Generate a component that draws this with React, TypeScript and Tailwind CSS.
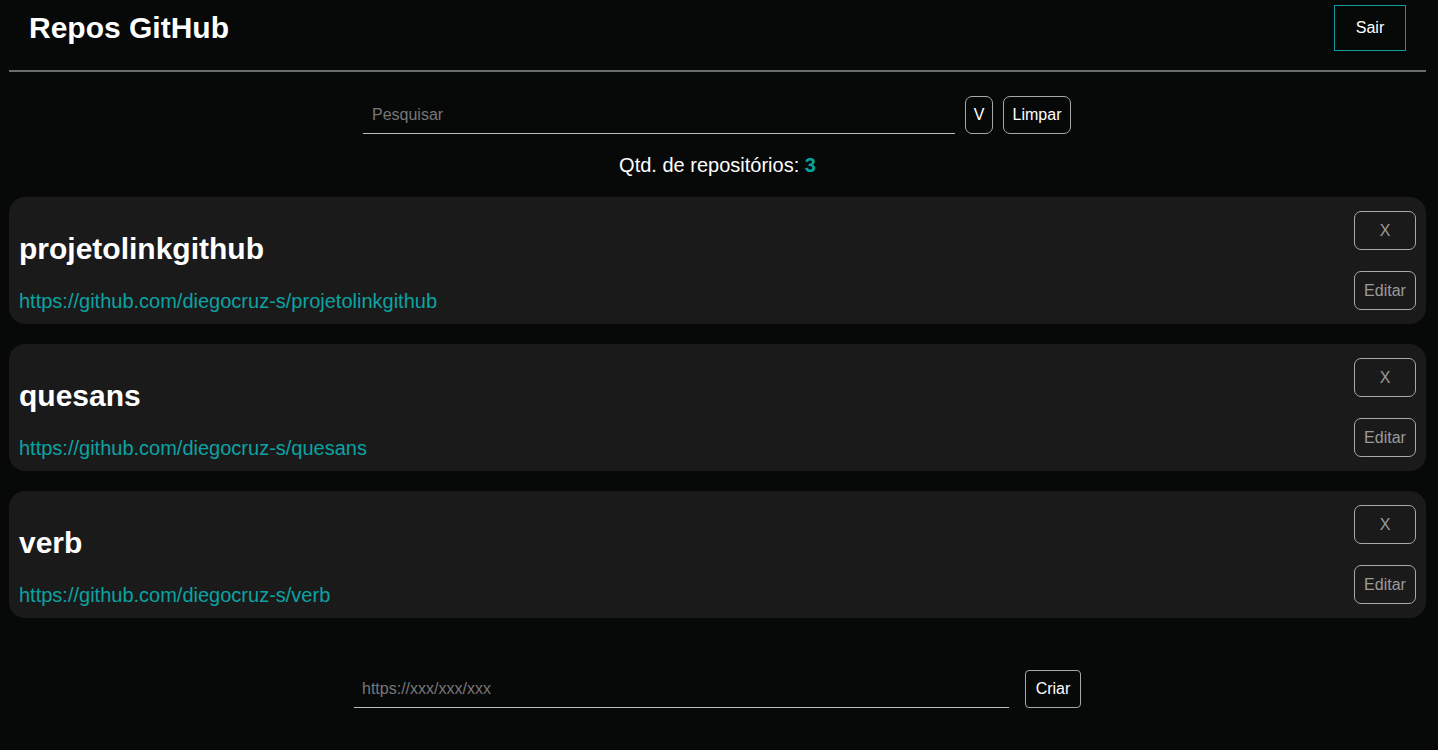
import { useState } from 'react';

interface Repo {
  name: string;
  url: string;
}

const initialRepos: Repo[] = [
  { name: 'projetolinkgithub', url: 'https://github.com/diegocruz-s/projetolinkgithub' },
  { name: 'quesans', url: 'https://github.com/diegocruz-s/quesans' },
  { name: 'verb', url: 'https://github.com/diegocruz-s/verb' },
];

function RepoCard({ repo, onRemove }: { repo: Repo; onRemove: () => void }) {
  return (
    <div className="flex justify-between rounded-[16px] bg-[#1a1a1a] px-[10px] h-[127px]">
      <div className="flex flex-col pt-[35px]">
        <h2 className="text-[30px] leading-[34px] font-bold text-white">{repo.name}</h2>
        <a href={repo.url} className="mt-[24px] text-[20px] leading-[23px] text-[#0aa3a3]">
          {repo.url}
        </a>
      </div>
      <div className="flex flex-col gap-[21px] pt-[14px]">
        <button
          onClick={onRemove}
          className="w-[62px] h-[39px] rounded-[7px] border border-[#a8a8a8] text-[16px] text-[#9a9a9a]"
        >
          X
        </button>
        <button className="w-[62px] h-[39px] rounded-[7px] border border-[#a8a8a8] text-[16px] text-[#9a9a9a]">
          Editar
        </button>
      </div>
    </div>
  );
}

export default function App() {
  const [repos, setRepos] = useState<Repo[]>(initialRepos);
  const [search, setSearch] = useState('');
  const [newUrl, setNewUrl] = useState('');

  return (
    <div className="min-h-[750px] bg-[#070808] text-white font-['Liberation_Sans',Arial,sans-serif]">
      <div className="w-[1435px]">
        <header className="flex items-center justify-between h-[55px] pl-[29px] pr-[29px]">
          <h1 className="text-[30px] font-bold leading-none">Repos GitHub</h1>
          <button className="w-[72px] h-[46px] border border-[#0e9c9c] text-[16px] text-white">Sair</button>
        </header>
        <div className="mx-[9px] mt-[15px] h-[2px] bg-[#6b6b6b]" />

        <div className="flex justify-center gap-[10px] mt-[24px] ml-[-1px]">
          <input
            value={search}
            onChange={(e) => setSearch(e.target.value)}
            placeholder="Pesquisar"
            className="w-[592px] h-[38px] bg-transparent border-b border-[#bdbdbd] px-[9px] text-[16px] text-white placeholder:text-[#777] outline-none"
          />
          <button className="w-[28px] h-[38px] rounded-[7px] border border-[#a8a8a8] text-[16px]">V</button>
          <button
            onClick={() => setSearch('')}
            className="w-[68px] h-[38px] rounded-[7px] border border-[#a8a8a8] text-[16px]"
          >
            Limpar
          </button>
        </div>

        <p className="text-center text-[20px] mt-[20px] leading-[23px]">
          Qtd. de repositórios: <span className="font-bold text-[#0aa3a3]">{repos.length}</span>
        </p>

        <div className="flex flex-col gap-[20px] mx-[9px] mt-[20px]">
          {repos.map((repo, i) => (
            <RepoCard key={repo.name} repo={repo} onRemove={() => setRepos(repos.filter((_, j) => j !== i))} />
          ))}
        </div>

        <div className="flex justify-center gap-[16px] mt-[52px] pb-[41px]">
          <input
            value={newUrl}
            onChange={(e) => setNewUrl(e.target.value)}
            placeholder="https://xxx/xxx/xxx"
            className="w-[655px] h-[38px] bg-transparent border-b border-[#bdbdbd] px-[8px] text-[16px] text-white placeholder:text-[#777] outline-none"
          />
          <button className="w-[56px] h-[38px] rounded-[4px] border border-[#a8a8a8] text-[16px]">Criar</button>
        </div>
      </div>
    </div>
  );
}
